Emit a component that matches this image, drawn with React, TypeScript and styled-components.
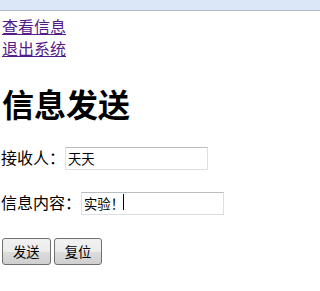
import React from "react";
import styled, { createGlobalStyle } from "styled-components";

const GlobalStyle = createGlobalStyle`
  html, body {
    margin: 0;
    padding: 0;
    background: #ffffff;
  }
  body {
    font-family: "Noto Sans CJK SC", "Noto Sans", sans-serif;
    color: #000000;
  }
`;

const TopBar = styled.div`
  height: 10px;
  background: #dbe7f7;
  border-bottom: 1px solid #b3bccb;
`;

const Page = styled.div`
  padding: 4px 0 0 1px;
`;

const Nav = styled.nav`
  display: flex;
  flex-direction: column;
  align-items: flex-start;
  padding-left: 1px;
`;

const NavLink = styled.a`
  font-size: 16px;
  line-height: 22px;
  color: #551a8b;
  text-decoration: underline;
`;

const Title = styled.h1`
  margin: 26px 0 25px 1px;
  font-size: 32px;
  line-height: 36px;
  font-weight: 700;
`;

const Form = styled.form`
  display: flex;
  flex-direction: column;
  gap: 22px;
`;

const Row = styled.div`
  display: flex;
  align-items: center;
  height: 23px;
`;

const Label = styled.label`
  font-size: 16px;
  line-height: 23px;
`;

const Field = styled.span`
  position: relative;
  display: inline-block;
`;

const TextInput = styled.input`
  box-sizing: border-box;
  width: 143px;
  height: 23px;
  padding: 0 2px;
  margin: 0;
  border: 1px solid #dcdfe3;
  border-top-color: #b9bcc1;
  font-family: "Noto Sans CJK SC", "Noto Sans", sans-serif;
  font-size: 13.33px;
  color: #000000;
  background: #ffffff;
  outline: none;
`;

const Caret = styled.span<{ $left: number }>`
  position: absolute;
  top: 4px;
  left: ${(p) => p.$left}px;
  width: 1px;
  height: 16px;
  background: #000000;
`;

const Buttons = styled.div`
  display: flex;
  gap: 3px;
  margin-top: 2px;
  padding-left: 1px;
`;

const Button = styled.button`
  box-sizing: border-box;
  height: 27px;
  padding: 0 10px;
  border: 1px solid #707070;
  border-radius: 3px;
  background: linear-gradient(
    to bottom,
    #f2f2f2 0%,
    #ebebeb 50%,
    #dddddd 51%,
    #cfcfcf 100%
  );
  font-family: "Noto Sans CJK SC", "Noto Sans", sans-serif;
  font-size: 13.33px;
  line-height: 1;
  color: #000000;
  cursor: pointer;
`;

export default function App() {
  return (
    <>
      <GlobalStyle />
      <TopBar />
      <Page>
        <Nav>
          <NavLink href="#">查看信息</NavLink>
          <NavLink href="#">退出系统</NavLink>
        </Nav>
        <Title>信息发送</Title>
        <Form onSubmit={(e) => e.preventDefault()}>
          <Row>
            <Label>接收人：</Label>
            <Field>
              <TextInput defaultValue="天天" />
            </Field>
          </Row>
          <Row>
            <Label>信息内容：</Label>
            <Field>
              <TextInput defaultValue="实验！" />
              <Caret $left={42} />
            </Field>
          </Row>
          <Buttons>
            <Button type="submit">发送</Button>
            <Button type="reset">复位</Button>
          </Buttons>
        </Form>
      </Page>
    </>
  );
}
